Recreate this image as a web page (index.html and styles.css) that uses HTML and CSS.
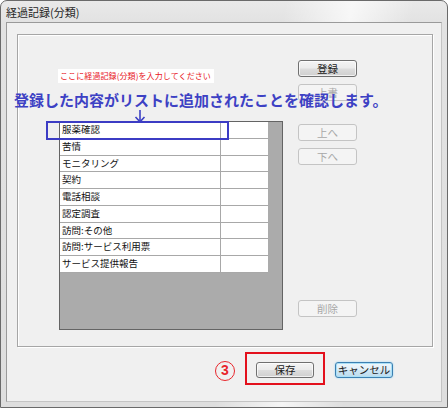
FILE: index.html
```html
<!DOCTYPE html>
<html lang="ja">
<head>
<meta charset="utf-8">
<title>経過記録(分類)</title>
<link rel="stylesheet" href="styles.css">
</head>
<body>
<div class="window">
  <div class="titlebar"><span class="title">経過記録(分類)</span></div>
  <div class="client">
    <div class="group">
      <div class="left-col">
        <div class="hint">ここに経過記録(分類)を入力してください</div>
        <div class="list">
          <div class="rows">
            <div class="row"><div class="c1">服薬確認</div><div class="c2"></div></div>
            <div class="row"><div class="c1">苦情</div><div class="c2"></div></div>
            <div class="row"><div class="c1">モニタリング</div><div class="c2"></div></div>
            <div class="row"><div class="c1">契約</div><div class="c2"></div></div>
            <div class="row"><div class="c1">電話相談</div><div class="c2"></div></div>
            <div class="row"><div class="c1">認定調査</div><div class="c2"></div></div>
            <div class="row"><div class="c1">訪問:その他</div><div class="c2"></div></div>
            <div class="row"><div class="c1">訪問:サービス利用票</div><div class="c2"></div></div>
            <div class="row"><div class="c1">サービス提供報告</div><div class="c2"></div></div>
          </div>
        </div>
      </div>
      <div class="btn-col">
        <div class="btn b-reg">登録</div>
        <div class="btn disabled b-over">上書</div>
        <div class="btn disabled b-up">上へ</div>
        <div class="btn disabled b-down">下へ</div>
        <div class="btn disabled b-del">削除</div>
      </div>
    </div>
    <div class="footer">
      <div class="btn b-save">保存</div>
      <div class="btn default b-cancel">キャンセル</div>
    </div>
  </div>

  <div class="note-text">登録した内容がリストに追加されたことを確認します。</div>
  <svg class="note-arrow" width="12" height="14" viewBox="0 0 12 14">
    <path d="M6 1 V12.5" stroke="#3d41c4" stroke-width="1.6" fill="none"/>
    <path d="M1.5 8 L6 12.8 L10.5 8" stroke="#3d41c4" stroke-width="1.6" fill="none"/>
  </svg>
  <div class="note-box"></div>
  <div class="step">3</div>
  <div class="step-box"></div>
</div>
</body>
</html>
```
FILE: styles.css
```css
html, body {
  margin: 0;
  padding: 0;
  background: #ffffff;
}

.window {
  position: relative;
  width: 448px;
  height: 408px;
  box-sizing: border-box;
  border: 1px solid #6a6a6a;
  border-radius: 7px 7px 0 0;
  padding: 0 5px 5px 5px;
  display: flex;
  flex-direction: column;
  font-family: "Noto Sans CJK JP", sans-serif;
  background:
    linear-gradient(100deg, rgba(255,255,255,0) 55%, rgba(255,255,255,0.7) 68%, rgba(255,255,255,0) 80%),
    linear-gradient(to bottom, #e9e9e9 0px, #e2e2e2 22px, #dedede 100%);
  overflow: hidden;
}

.titlebar {
  height: 21px;
  display: flex;
  align-items: center;
  padding-left: 0;
}

.title {
  font-size: 11px;
  color: #1f1f1f;
  line-height: 14px;
}

.client {
  flex: 1;
  background: #f0f0f0;
  border: 1px solid #9a9a9a;
  border-right-color: #c4c4c4;
  border-bottom-color: #c4c4c4;
  display: flex;
  flex-direction: column;
}

.group {
  margin: 11px 8px 0 10px;
  height: 313px;
  box-sizing: border-box;
  border: 1px solid #a6a6a6;
  box-shadow: inset 1px 1px 0 #ffffff, 1px 1px 0 #ffffff;
  display: flex;
  align-items: flex-start;
}

.left-col {
  padding-left: 40px;
  padding-top: 34px;
  display: flex;
  flex-direction: column;
}

.hint {
  width: 156px;
  height: 14px;
  background: #ffffff;
  color: #e8141c;
  font-size: 8px;
  line-height: 14px;
  padding-left: 2px;
  box-sizing: border-box;
  white-space: nowrap;
  letter-spacing: 0.1px;
}

.list {
  margin-top: 38px;
  margin-left: 1px;
  width: 224px;
  height: 209px;
  box-sizing: border-box;
  border: 1px solid #646464;
  background: #ababab;
}

.rows {
  width: 208px;
  background: #ffffff;
}

.row {
  display: flex;
  height: 16.75px;
  box-sizing: border-box;
  border-bottom: 1px solid #a8a8a8;
}

.c1 {
  width: 161px;
  box-sizing: border-box;
  border-right: 1px solid #a8a8a8;
  padding-left: 2px;
  font-size: 9.5px;
  line-height: 15.75px;
  color: #111111;
  white-space: nowrap;
}

.c2 {
  flex: 1;
}

.btn-col {
  margin-left: 15px;
  padding-top: 25px;
  display: flex;
  flex-direction: column;
}

.btn {
  width: 59px;
  height: 17px;
  box-sizing: border-box;
  border: 1px solid #707070;
  border-radius: 3px;
  background: linear-gradient(to bottom, #f4f4f4 0%, #ebebeb 48%, #dddddd 52%, #cfcfcf 100%);
  box-shadow: inset 0 0 0 1px rgba(255,255,255,0.7);
  font-size: 10.5px;
  line-height: 15px;
  text-align: center;
  color: #1a1a1a;
}

.btn.disabled {
  border-color: #c4c4c4;
  background: #f4f4f4;
  box-shadow: none;
  color: #a8a8a8;
}

.b-over { margin-top: 7px; }
.b-up { margin-top: 23px; }
.b-down { margin-top: 7px; }
.b-del { margin-top: 135px; }

.footer {
  margin-top: 15px;
  display: flex;
  justify-content: flex-end;
  gap: 21px;
  padding-right: 48px;
}

.footer .btn {
  width: 58px;
  height: 16px;
  line-height: 14px;
}

.btn.default {
  border-color: #3c7fb1;
  background: linear-gradient(to bottom, #eef7fc 0%, #e1eff8 48%, #cde6f4 52%, #bcdcee 100%);
  box-shadow: inset 0 0 0 1px #a9e0f7, 0 0 2px #8fd6f7;
}

/* annotation overlays */
.note-text {
  position: absolute;
  left: 13px;
  top: 91px;
  font-size: 15px;
  line-height: 16px;
  font-weight: bold;
  color: #3d41c4;
  white-space: nowrap;
}

.note-arrow {
  position: absolute;
  left: 133px;
  top: 108px;
}

.note-box {
  position: absolute;
  left: 45px;
  top: 120px;
  width: 183px;
  height: 19px;
  box-sizing: border-box;
  border: 2px solid #3c3cc4;
}

.step {
  position: absolute;
  left: 214px;
  top: 360px;
  width: 20px;
  height: 20px;
  box-sizing: border-box;
  border: 1.5px solid #e8262c;
  border-radius: 50%;
  color: #e8262c;
  font-size: 14px;
  font-weight: bold;
  line-height: 17px;
  text-align: center;
  font-family: "Liberation Sans", sans-serif;
}

.step-box {
  position: absolute;
  left: 244px;
  top: 351px;
  width: 80px;
  height: 33px;
  box-sizing: border-box;
  border: 2px solid #e3101c;
}
```
